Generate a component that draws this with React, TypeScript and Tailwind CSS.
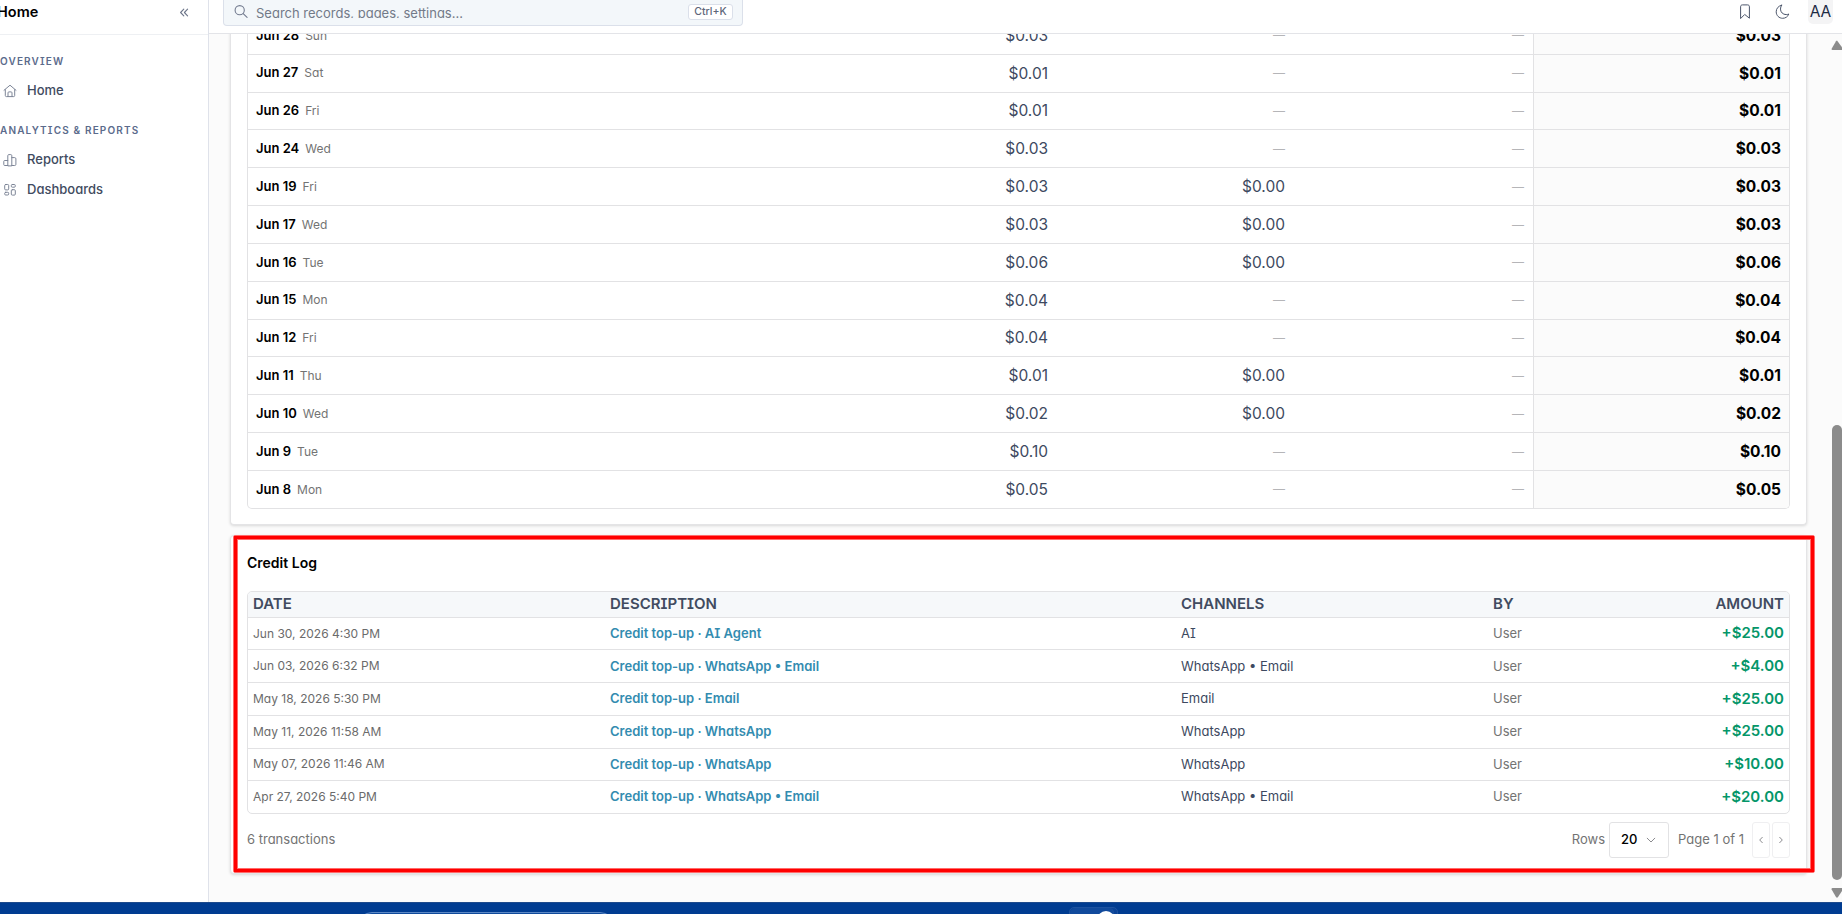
import clsx from 'clsx'
import type { ReactNode } from 'react'

interface UsageRow {
    date: string
    day: string
    ai: string
    whatsapp?: string
    email?: string
    total: string
}

interface CreditEntry {
    date: string
    description: string
    channels: string
    by: string
    amount: string
}

const USAGE: UsageRow[] = [
    { date: 'Jun 28', day: 'Sun', ai: '$0.03', total: '$0.03' },
    { date: 'Jun 27', day: 'Sat', ai: '$0.01', total: '$0.01' },
    { date: 'Jun 26', day: 'Fri', ai: '$0.01', total: '$0.01' },
    { date: 'Jun 24', day: 'Wed', ai: '$0.03', total: '$0.03' },
    { date: 'Jun 19', day: 'Fri', ai: '$0.03', whatsapp: '$0.00', total: '$0.03' },
    { date: 'Jun 17', day: 'Wed', ai: '$0.03', whatsapp: '$0.00', total: '$0.03' },
    { date: 'Jun 16', day: 'Tue', ai: '$0.06', whatsapp: '$0.00', total: '$0.06' },
    { date: 'Jun 15', day: 'Mon', ai: '$0.04', total: '$0.04' },
    { date: 'Jun 12', day: 'Fri', ai: '$0.04', total: '$0.04' },
    { date: 'Jun 11', day: 'Thu', ai: '$0.01', whatsapp: '$0.00', total: '$0.01' },
    { date: 'Jun 10', day: 'Wed', ai: '$0.02', whatsapp: '$0.00', total: '$0.02' },
    { date: 'Jun 9', day: 'Tue', ai: '$0.10', total: '$0.10' },
    { date: 'Jun 8', day: 'Mon', ai: '$0.05', total: '$0.05' },
]

const CREDITS: CreditEntry[] = [
    { date: 'Jun 30, 2026 4:30 PM', description: 'Credit top-up · AI Agent', channels: 'AI', by: 'User', amount: '+$25.00' },
    { date: 'Jun 03, 2026 6:32 PM', description: 'Credit top-up · WhatsApp • Email', channels: 'WhatsApp • Email', by: 'User', amount: '+$4.00' },
    { date: 'May 18, 2026 5:30 PM', description: 'Credit top-up · Email', channels: 'Email', by: 'User', amount: '+$25.00' },
    { date: 'May 11, 2026 11:58 AM', description: 'Credit top-up · WhatsApp', channels: 'WhatsApp', by: 'User', amount: '+$25.00' },
    { date: 'May 07, 2026 11:46 AM', description: 'Credit top-up · WhatsApp', channels: 'WhatsApp', by: 'User', amount: '+$10.00' },
    { date: 'Apr 27, 2026 5:40 PM', description: 'Credit top-up · WhatsApp • Email', channels: 'WhatsApp • Email', by: 'User', amount: '+$20.00' },
]

const CREDIT_COLS = 'grid grid-cols-[357px_571px_312px_1fr] items-center pl-[5px] pr-[5px]'

function Svg({ size, stroke = 1, className, children }: { size: number; stroke?: number; className?: string; children: ReactNode }) {
    return (
        <svg
            width={size}
            height={size}
            viewBox={`0 0 ${size} ${size}`}
            fill="none"
            stroke="currentColor"
            strokeWidth={stroke}
            strokeLinecap="round"
            strokeLinejoin="round"
            className={clsx('shrink-0', className)}
        >
            {children}
        </svg>
    )
}

const HomeIcon = () => (
    <Svg size={14}>
        <path d="M1 6.3 7 1.2l6 5.1" />
        <path d="M2.3 5.6v5.9c0 .7.4 1.1 1.1 1.1h7.2c.7 0 1.1-.4 1.1-1.1V5.6" />
        <path d="M5 12.4V8.8c0-.6.3-.9.9-.9h2.2c.6 0 .9.3.9.9v3.6" />
    </Svg>
)

const ReportsIcon = () => (
    <Svg size={14}>
        <path d="M4.8 12.5H1.6c-.5 0-.8-.3-.8-.8V8.3c0-.5.3-.8.8-.8h3.2" />
        <path d="M4.8 12.5V2.6c0-.6.4-1 1-1h2c.6 0 1 .4 1 1v9.9z" />
        <path d="M8.8 4.6h2.9c.7 0 1.2.5 1.2 1.2v5.6c0 .7-.5 1.1-1.2 1.1H8.8" />
    </Svg>
)

const DashboardsIcon = () => (
    <Svg size={14}>
        <rect x="1.7" y="1.5" width="4" height="5.4" rx="1" />
        <rect x="8.3" y="1.5" width="4" height="2.7" rx="1" />
        <rect x="1.7" y="9.3" width="4" height="2.7" rx="1" />
        <rect x="8.3" y="6.7" width="4" height="5.4" rx="1" />
    </Svg>
)

function NavItem({ icon, label }: { icon: ReactNode; label: string }) {
    return (
        <div className="flex h-[30px] items-center gap-[10px] pl-[3px] text-[#7d8597]">
            {icon}
            <span className="text-[13px] font-medium text-[#414b60]">{label}</span>
        </div>
    )
}

function NavHeading({ children }: { children: ReactNode }) {
    return <p className="h-[14px] text-[10px] leading-[14px] font-semibold tracking-[1.15px] whitespace-nowrap text-[#5b6b8c]">{children}</p>
}

function Sidebar() {
    return (
        <aside className="w-[209px] shrink-0 border-r border-[#dfe2ea] bg-white">
            <div className="flex h-[35px] items-start justify-between border-b border-[#eef0f3] pr-[19px]">
                <span className="-ml-[3px] pt-[2px] text-[14.5px] leading-[20px] font-semibold text-black">Home</span>
                <Svg size={10} stroke={1.1} className="mt-[8px] text-[#6c7589]">
                    <path d="M4.8 1.2 1.6 4.5l3.2 3.3M8.6 1.2 5.4 4.5l3.2 3.3" />
                </Svg>
            </div>
            <div className="pt-[19px]">
                <NavHeading>OVERVIEW</NavHeading>
                <div className="mt-[8px]">
                    <NavItem icon={<HomeIcon />} label="Home" />
                </div>
            </div>
            <div className="pt-[17px]">
                <NavHeading>ANALYTICS &amp; REPORTS</NavHeading>
                <div className="mt-[8px]">
                    <NavItem icon={<ReportsIcon />} label="Reports" />
                    <NavItem icon={<DashboardsIcon />} label="Dashboards" />
                </div>
            </div>
        </aside>
    )
}

function TopBar() {
    return (
        <header className="flex h-[34px] shrink-0 items-start justify-between border-b border-[#e3e4e8] bg-white pr-[9px] pl-[14px]">
            <div className="flex h-[26px] w-[520px] items-start rounded-b-[4px] border border-t-0 border-[#dbe0ea] bg-[#f3f7fa] pr-[9px] pl-[9px]">
                <Svg size={16} stroke={1.1} className="mt-[3px] text-[#737b8f]">
                    <circle cx="6.7" cy="7.2" r="4.6" />
                    <path d="m10.2 10.7 3.9 3.6" />
                </Svg>
                <span className="ml-[7px] h-[18px] flex-1 overflow-hidden pt-[3px] text-[13px] leading-[20px] text-[#727a88]">Search records, pages, settings...</span>
                <span className="mt-[4px] flex h-[16px] w-[45px] items-center justify-center rounded-[3px] border border-[#dbe0ea] bg-white text-[10.5px] font-medium text-[#5d667a]">
                    Ctrl+K
                </span>
            </div>
            <div className="flex items-start text-[#4c566b]">
                <Svg size={16} className="mt-[4px] mr-[22px]">
                    <path d="M3.6 14.2V2.8C3.6 1.5 4.3.9 5.4.9h5.2c1.1 0 1.8.6 1.8 1.9v11.4L8 10.7z" />
                </Svg>
                <Svg size={16} className="mt-[4px] mr-[17px]">
                    <path d="M6.6 1.2C3.4 1.9 1.2 4.500 1.200 7.800c0 3.700 2.900 6.500 6.500 6.500 2.800 0 5.200-1.700 6.100-4.300-.8.400-1.700.6-2.600.6-3.300 0-5.700-2.400-5.700-5.500 0-1.400.4-2.800 1.100-3.900z" />
                </Svg>
                <span className="flex h-[24px] w-[25px] items-center justify-center rounded-b-[5px] bg-[#f4f4f5] text-[15.500px] text-[#1c2a44]">AA</span>
            </div>
        </header>
    )
}

const Dash = () => <span className="text-[12px] text-[#b5b5b8]">—</span>

function UsageCard() {
    return (
        <section className="-mt-[17px] rounded-b-[4px] border border-t-0 border-[#e4e4e6] bg-white px-[16px] pb-[15px] shadow-[0_1px_3px_rgba(0,0,0,0.14)]">
            <div className="overflow-hidden rounded-b-[5px] border border-t-0 border-[#e2e2e4]">
                {USAGE.map((row, i) => (
                    <div
                        key={row.date}
                        className={clsx(
                            'grid grid-cols-[800px_237px_249px_1fr] items-stretch text-[15.500px] text-[#3d4960]',
                            i === USAGE.length - 1 ? 'h-[36.830px]' : 'h-[37.830px] border-b border-[#e2e2e4]',
                        )}
                    >
                        <div className="flex items-center justify-between pl-[8px]">
                            <span className="flex items-baseline gap-[6px]">
                                <span className="text-[13px] font-semibold text-black">{row.date}</span>
                                <span className="text-[12px] text-[#737373]">{row.day}</span>
                            </span>
                            <span>{row.ai}</span>
                        </div>
                        <div className="flex items-center justify-end">{row.whatsapp ?? <Dash />}</div>
                        <div className="flex items-center justify-end border-r border-[#e2e2e4] pr-[9px]">{row.email ?? <Dash />}</div>
                        <div className="flex items-center justify-end bg-[#fbfbfb] pr-[8px] font-bold text-black">{row.total}</div>
                    </div>
                ))}
            </div>
        </section>
    )
}

function Pager() {
    return (
        <div className="mt-[8px] flex h-[36px] items-center justify-between text-[13px] text-[#737373]">
            <span>6 transactions</span>
            <div className="flex h-full items-center">
                <span>Rows</span>
                <div className="ml-[4px] flex h-full w-[60px] items-center justify-between rounded-[3px] border border-[#e2e2e4] pr-[11px] pl-[11px] font-medium text-black">
                    20
                    <Svg size={12} className="text-[#8b8b8f]">
                        <path d="m2.200 4.200 3.800 3.800 3.800-3.800" />
                    </Svg>
                </div>
                <span className="ml-[9px]">Page 1 of 1</span>
                <div className="ml-[8px] flex h-full w-[18px] items-center justify-center rounded-[3px] border border-[#efeff1] text-[#8b8b8f]">
                    <Svg size={8}>
                        <path d="M5.300 1.300 2.700 4l2.600 2.700" />
                    </Svg>
                </div>
                <div className="ml-[2px] flex h-full w-[18px] items-center justify-center rounded-[3px] border border-[#efeff1] text-[#8b8b8f]">
                    <Svg size={8}>
                        <path d="M2.700 1.300 5.300 4 2.700 6.700" />
                    </Svg>
                </div>
            </div>
        </div>
    )
}

function CreditLogCard() {
    return (
        <section className="relative mt-[10px] h-[339px] rounded-[4px] border border-[#e4e4e6] bg-white px-[16px] shadow-[0_1px_3px_rgba(0,0,0,0.14)]">
            <h2 className="pt-[17px] text-[14px] leading-[20px] font-semibold text-black">Credit Log</h2>
            <div className="mt-[18px] overflow-hidden rounded-[5px] border border-[#e2e2e4]">
                <div className={clsx(CREDIT_COLS, 'h-[26px] border-b border-[#e2e2e4] bg-[#f6f8fa] text-[15px] font-semibold text-[#414b60]')}>
                    <span>DATE</span>
                    <span>DESCRIPTION</span>
                    <span>CHANNELS</span>
                    <div className="flex justify-between">
                        <span>BY</span>
                        <span>AMOUNT</span>
                    </div>
                </div>
                {CREDITS.map((entry, i) => (
                    <div
                        key={entry.date}
                        className={clsx(CREDIT_COLS, 'text-[13px] text-[#3d4960]', i === CREDITS.length - 1 ? 'h-[31.700px]' : 'h-[32.700px] border-b border-[#e2e2e4]')}
                    >
                        <span className="text-[12px] text-[#6b6b6b]">{entry.date}</span>
                        <span className="font-semibold text-[#338cb0]">{entry.description}</span>
                        <span>{entry.channels}</span>
                        <div className="flex items-center justify-between">
                            <span className="text-[#737373]">{entry.by}</span>
                            <span className="text-[15px] font-semibold text-[#059669]">{entry.amount}</span>
                        </div>
                    </div>
                ))}
            </div>
            <Pager />
            {/* highlight frame over the credit log */}
            <div className="absolute -top-px left-[2px] h-[338px] w-[1582px] rounded-[2px] border border-[#ff6b6b]">
                <div className="h-full w-full border-[3px] border-[#ff0000]">
                    <div className="h-full w-full border border-[#ff6b6b]" />
                </div>
            </div>
        </section>
    )
}

function ScrollBar() {
    return (
        <div className="flex w-[11px] shrink-0 flex-col items-end text-[#8b8b8b]">
            <svg width="11" height="10" viewBox="0 0 11 10" className="mt-[6px]" fill="currentColor">
                <path d="M6 .5 11.500 8v2H1.500Q.3 10 .6 8.700L5 1.200Q5.500.500 6 .500z" />
            </svg>
            <div className="mt-[375px] h-[455px] w-[10px] rounded-t-[5px] rounded-b-[5px] bg-[#8b8b8b]" />
            <svg width="11" height="10" viewBox="0 0 11 10" className="mt-[8px]" fill="currentColor">
                <path d="M1.500 0H11v3L7 9Q6 10.300 5 9L.6 1.500Q.3 0 1.500 0z" />
            </svg>
        </div>
    )
}

function Taskbar() {
    return (
        <footer className="flex h-[12px] shrink-0 overflow-hidden border-t border-[#1d4a8c] bg-[#003c91]">
            <div className="mt-[9px] ml-[357px] h-[30px] w-[258px] rounded-[15px] border border-[#5d88c4] bg-[#0f4a9c]" />
            <div className="mt-[4px] ml-[454px] flex h-[30px] w-[49px] rounded-[5px] border border-[#1d529f] bg-[#0a4397]">
                <div className="h-[30px] w-[44px] rounded-[5px] border-r border-[#1d529f] bg-[#114a9c] pt-[3px] pl-[27px]">
                    <div className="h-[18px] w-[18px] rounded-full bg-white" />
                </div>
            </div>
        </footer>
    )
}

export default function App() {
    return (
        <div className="flex h-[914px] w-[1842px] flex-col overflow-hidden bg-[#fbfbfb] font-['Inter',sans-serif] [font-feature-settings:'cv11','cv08']">
            <div className="flex h-[902px]">
                <Sidebar />
                <div className="flex min-w-0 flex-1 flex-col">
                    <TopBar />
                    <div className="flex min-h-0 flex-1 overflow-hidden">
                        <main className="min-w-0 flex-1 pr-[24px] pl-[21px]">
                            <UsageCard />
                            <CreditLogCard />
                        </main>
                        <ScrollBar />
                    </div>
                </div>
            </div>
            <Taskbar />
        </div>
    )
}
